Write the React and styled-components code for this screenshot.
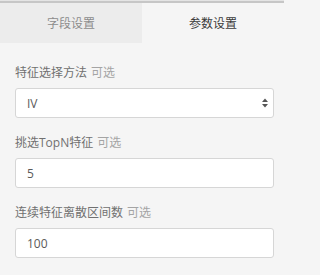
import React from 'react'
import styled, { createGlobalStyle } from 'styled-components'

const GlobalStyle = createGlobalStyle`
  html, body {
    margin: 0;
    padding: 0;
    background: #f5f5f5;
  }
  body {
    font-family: "Open Sans", "Noto Sans CJK SC", sans-serif;
  }
`

const Panel = styled.div`
  width: 284px;
  height: 275px;
  box-sizing: border-box;
  background: #f5f5f5;
  border-top: 1px solid #e4e4e4;
`

const Tabs = styled.div`
  display: flex;
  border-top: 2px solid #c6c6c6;
`

const Tab = styled.div`
  flex: 1;
  height: 40px;
  display: flex;
  align-items: center;
  justify-content: center;
  font-size: 12px;
  color: ${(props) => (props.active ? '#3a3a3a' : '#8c8c8c')};
  background: ${(props) => (props.active ? '#f5f5f5' : '#ececec')};
`

const Form = styled.div`
  padding: 21px 10px 0 15px;
  display: flex;
  flex-direction: column;
  gap: 16px;
`

const Field = styled.div`
  display: flex;
  flex-direction: column;
  gap: 6px;
`

const Label = styled.div`
  font-size: 12px;
  line-height: 18px;
  color: #707070;
`

const Hint = styled.span`
  color: #a4a4a4;
  margin-left: 4px;
`

const Input = styled.input`
  box-sizing: border-box;
  width: 100%;
  height: 30px;
  padding: 0 11px;
  border: 1px solid #d6d6d6;
  border-radius: 3px;
  background: #fff;
  font-family: inherit;
  font-size: 12px;
  color: #5a5a5a;
  outline: none;
`

const SelectWrap = styled.div`
  position: relative;
`

const Select = styled.select`
  box-sizing: border-box;
  width: 100%;
  height: 30px;
  padding: 0 11px;
  border: 1px solid #d6d6d6;
  border-radius: 3px;
  background: #fff;
  font-family: inherit;
  font-size: 12px;
  color: #5a5a5a;
  appearance: none;
  -webkit-appearance: none;
  outline: none;
`

const Arrows = styled.svg`
  position: absolute;
  right: 5px;
  top: 10px;
  pointer-events: none;
`

const App = () => {
  return (
    <Panel>
      <GlobalStyle />
      <Tabs>
        <Tab>字段设置</Tab>
        <Tab active>参数设置</Tab>
      </Tabs>
      <Form>
        <Field>
          <Label>
            特征选择方法<Hint>可选</Hint>
          </Label>
          <SelectWrap>
            <Select defaultValue='IV'>
              <option value='IV'>IV</option>
            </Select>
            <Arrows width='8' height='10' viewBox='0 0 8 10'>
              <path d='M4 0.5 L7 4 L1 4 Z' fill='#555' />
              <path d='M4 9.5 L7 6 L1 6 Z' fill='#555' />
            </Arrows>
          </SelectWrap>
        </Field>
        <Field>
          <Label>
            挑选TopN特征<Hint>可选</Hint>
          </Label>
          <Input defaultValue='5' />
        </Field>
        <Field>
          <Label>
            连续特征离散区间数<Hint>可选</Hint>
          </Label>
          <Input defaultValue='100' />
        </Field>
      </Form>
    </Panel>
  )
}

export default App
